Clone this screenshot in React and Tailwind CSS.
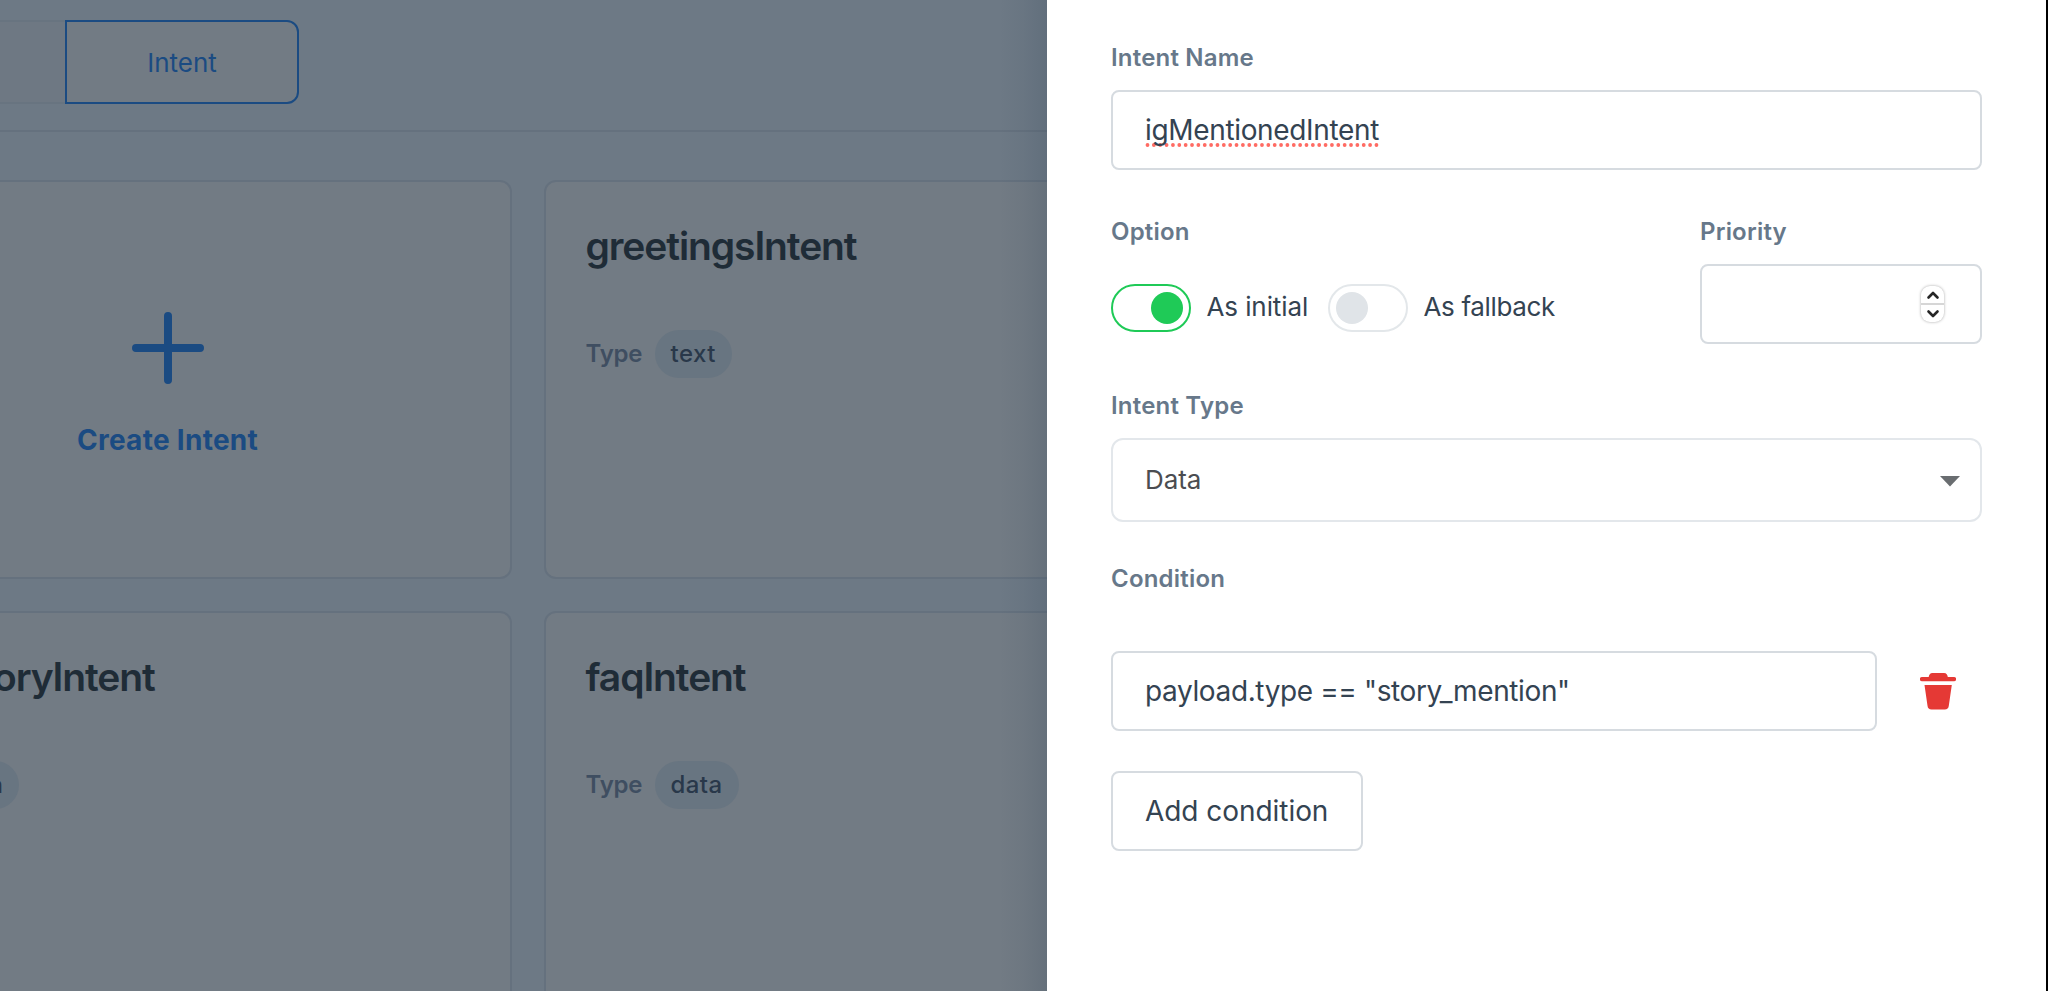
import React from "react";

function Label({ children }) {
  return (
    <div className="h-8 leading-8 text-[24px] font-semibold tracking-[0.2px] text-[#67788a]">
      {children}
    </div>
  );
}

function Toggle({ on }) {
  return on ? (
    <div className="flex h-12 w-20 shrink-0 items-center justify-end rounded-full border-2 border-[#1fca57] px-1.5">
      <div className="size-8 rounded-full bg-[#1fca57]" />
    </div>
  ) : (
    <div className="flex h-12 w-20 shrink-0 items-center justify-start rounded-full border-2 border-[#e3e7ea] px-1.5">
      <div className="size-8 rounded-full bg-[#e0e4e8]" />
    </div>
  );
}

function SpellUnderline() {
  return (
    <svg className="absolute left-0 top-[33px]" width="236" height="5" aria-hidden="true">
      <line x1="2.5" y1="2" x2="234" y2="2" stroke="#ff6b63" strokeWidth="3.8" strokeLinecap="round" strokeDasharray="0 6.36" />
    </svg>
  );
}

function Stepper() {
  return (
    <div className="flex h-[36px] w-[23px] flex-col overflow-hidden rounded-[9px] bg-white shadow-[0_0_3px_rgba(0,0,0,0.35)]">
      <div className="flex flex-1 items-center justify-center border-b-2 border-[#d6d6d6]">
        <svg width="14" height="10" viewBox="0 0 14 10" fill="none" stroke="#262626" strokeWidth="2.6" strokeLinecap="round" strokeLinejoin="round">
          <path d="M2.5 7.5 7 3l4.500 4.500" />
        </svg>
      </div>
      <div className="flex flex-1 items-center justify-center">
        <svg width="14" height="10" viewBox="0 0 14 10" fill="none" stroke="#262626" strokeWidth="2.6" strokeLinecap="round" strokeLinejoin="round">
          <path d="M2.5 2.500 7 7l4.500-4.500" />
        </svg>
      </div>
    </div>
  );
}

function TrashIcon() {
  return (
    <svg width="36" height="37" viewBox="0 0 36 37" fill="#e53935">
      <path d="M8.700 4C9 2 10 0 12.500 0h11.500c2.500 0 3.500 2 3.800 4H34a2 2 0 0 1 0 4.200H2A2 2 0 0 1 2 4Z" />
      <path d="M4.500 12h27.300l-3 20.800c-.3 2.500-1.600 3.700-4 3.700H11.500c-2.400 0-3.700-1.200-4-3.700Z" />
    </svg>
  );
}

function IntentCard({ name, type }) {
  return (
    <div className="h-[399px] w-[600px] shrink-0 rounded-xl border-2 border-[#65717e] bg-[#727b84] pl-[39.500px] pt-[40px]">
      <div className="h-12 leading-[48px] text-[39px] font-semibold tracking-[-1.1px] text-[#1f2c37]">{name}</div>
      <div className="mt-[60px] flex h-12 items-center text-[24px]">
        <span className="w-[69px] font-semibold tracking-[-0.2px] text-[#3f4e61]">Type</span>
        <span className="flex h-12 items-center rounded-full bg-[#687581] px-4 font-medium tracking-[0.45px] text-[#29384a]">{type}</span>
      </div>
    </div>
  );
}

function Board() {
  return (
    <main className="flex w-[1047px] shrink-0 flex-col overflow-hidden bg-[#6d7985]">
      <header className="h-[132px] shrink-0 border-b-2 border-[#65717e] pt-5">
        <div className="flex h-[84px]">
          <div className="w-[65px] border-y-2 border-[#687480] bg-[#6e7883]" />
          <div className="flex w-[234px] items-center justify-center rounded-r-xl border-2 border-[#1b4b82] bg-[#727b84] text-[26px] text-[#1b4b82]">
            Intent
          </div>
        </div>
      </header>

      <section className="flex shrink-0 gap-8 pt-12">
        <div className="h-[399px] w-[512px] shrink-0 rounded-r-xl border-2 border-l-0 border-[#65717e] bg-[#727b84]">
          <div className="flex w-[336px] flex-col items-center pt-[130px] text-[#1b4b82]">
            <svg width="72" height="72" fill="none" stroke="currentColor" strokeWidth="8" strokeLinecap="round">
              <path d="M36 4v64M4 36h64" />
            </svg>
            <div className="mt-[36px] h-10 pr-px leading-10 text-[28px] font-bold tracking-[0.28px]">Create Intent</div>
          </div>
        </div>
        <IntentCard name="greetingsIntent" type="text" />
      </section>

      <section className="flex shrink-0 gap-8 pt-8">
        <div className="h-[399px] w-[512px] shrink-0 rounded-r-xl border-2 border-l-0 border-[#65717e] bg-[#727b84] pt-[40px]">
          <div className="-ml-[7px] h-12 leading-[48px] text-[39px] font-semibold tracking-[-1.1px] text-[#1f2c37]">oryIntent</div>
          <div className="mt-[60px] flex h-12 w-[19px] justify-end overflow-hidden text-[24px]">
            <span className="flex h-12 w-[86px] shrink-0 items-center justify-end rounded-full bg-[#687581] pr-4 font-medium text-[#29384a]">n</span>
          </div>
        </div>
        <IntentCard name="faqIntent" type="data" />
      </section>
    </main>
  );
}

export default function App() {
  return (
    <div className="flex h-[991px] w-[2048px] overflow-hidden bg-black font-['Inter',sans-serif]">
      <Board />
      <aside className="relative flex w-[999px] shrink-0 flex-col bg-white px-16 pt-[42px] text-[#344352]">
        <div className="absolute inset-y-0 right-full w-12 bg-gradient-to-l from-[#283c50]/17 via-[#283c50]/6 to-[#283c50]/0" />
        <Label>Intent Name</Label>
        <div className="mt-4 flex h-20 items-center rounded-lg border-2 border-[#d6dbe0] pl-[32px]">
          <div className="relative h-10 leading-10 text-[28px] tracking-[-0.34px]">
            <SpellUnderline />
            <span className="relative">igMentionedIntent</span>
          </div>
        </div>

        <div className="mt-[46px] flex justify-between">
          <div>
            <Label>Option</Label>
            <div className="mt-[36px] flex h-12 items-center text-[26px]">
              <Toggle on />
              <span className="ml-[15.500px] w-[101.500px] whitespace-nowrap pb-[3px] tracking-[-0.1px]">As initial</span>
              <div className="ml-5 flex items-center">
                <Toggle />
                <span className="ml-[15.500px] whitespace-nowrap pb-[3px] tracking-[-0.35px]">As fallback</span>
              </div>
            </div>
          </div>
          <div className="w-[282px]">
            <Label>Priority</Label>
            <div className="mt-4 flex h-20 items-center justify-end rounded-lg border-2 border-[#d6dbe0] pr-[36px]">
              <Stepper />
            </div>
          </div>
        </div>

        <div className="mt-[45.500px]">
          <Label>Intent Type</Label>
          <div className="mt-4 flex h-[84px] items-center justify-between rounded-xl border-2 border-[#e3e7eb] pl-[32px] pr-[20px]">
            <span className="text-[26px] tracking-[-0.1px] text-[#4b4d51]">Data</span>
            <svg width="20" height="11" viewBox="0 0 20 11" fill="#696d70" className="mt-[4px]">
              <path d="M0 0h20L10 10.500Z" />
            </svg>
          </div>
        </div>

        <div className="mt-[41.500px]">
          <Label>Condition</Label>
          <div className="mt-[56px] flex items-center">
            <div className="flex h-20 w-[766px] items-center rounded-lg border-2 border-[#d6dbe0] pl-[32px] text-[28px] tracking-[-0.38px]">
              payload.type == "story_mention"
            </div>
            <div className="ml-[43px]">
              <TrashIcon />
            </div>
          </div>
          <div className="mt-10 flex h-20 w-[252px] items-center rounded-lg border-2 border-[#d6dbe0] pl-[32px] text-[28px] tracking-[-0.05px]">
            Add condition
          </div>
        </div>
      </aside>
    </div>
  );
}
